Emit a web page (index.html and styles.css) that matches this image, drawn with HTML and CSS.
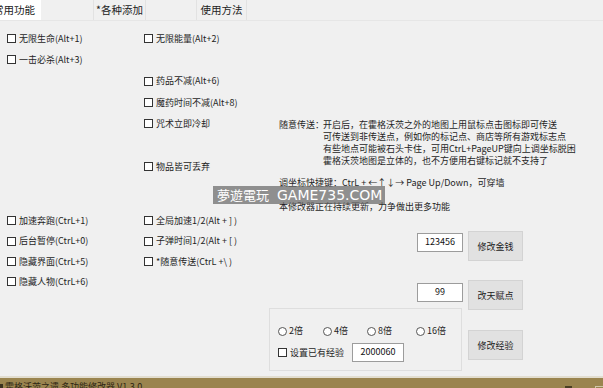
FILE: index.html
```html
<!DOCTYPE html>
<html lang="zh-CN">
<head>
<meta charset="utf-8">
<title>霍格沃茨之遗 多功能修改器</title>
<link rel="stylesheet" href="styles.css">
</head>
<body>
<div class="app">
  <div class="tabs">
    <div class="tab tab-active">常用功能</div>
    <div class="tab tab-add">*各种添加</div>
    <div class="tab tab-help">使用方法</div>
  </div>

  <div class="main">
    <div class="left">
      <div class="grid grid-upper">
        <label class="cb"><span class="box"></span>无限生命(Alt+1)</label>
        <label class="cb"><span class="box"></span>无限能量(Alt+2)</label>
        <label class="cb"><span class="box"></span>一击必杀(Alt+3)</label>
        <div></div>
        <div></div>
        <label class="cb"><span class="box"></span>药品不减(Alt+6)</label>
        <div></div>
        <label class="cb"><span class="box"></span>魔药时间不减(Alt+8)</label>
        <div></div>
        <label class="cb"><span class="box"></span>咒术立即冷却</label>
        <div></div>
        <div></div>
        <div></div>
        <label class="cb"><span class="box"></span>物品皆可丢弃</label>
      </div>
      <div class="grid grid-lower">
        <label class="cb"><span class="box"></span>加速奔跑(CtrL+1)</label>
        <label class="cb"><span class="box"></span>全局加速1/2(Alt + ] )</label>
        <label class="cb"><span class="box"></span>后台暂停(CtrL+0)</label>
        <label class="cb"><span class="box"></span>子弹时间1/2(Alt + [ )</label>
        <label class="cb"><span class="box"></span>隐藏界面(CtrL+5)</label>
        <label class="cb"><span class="box"></span>*随意传送(CtrL +\ )</label>
        <label class="cb"><span class="box"></span>隐藏人物(CtrL+6)</label>
        <div></div>
      </div>
    </div>

    <div class="right">
      <div class="note">
        <div class="note-tele">
          <span class="note-label">随意传送：</span>
          <div class="note-lines">
            <p>开启后，在霍格沃茨之外的地图上用鼠标点击图标即可传送</p>
            <p>可传送到非传送点，例如你的标记点、商店等所有游戏标志点</p>
            <p>有些地点可能被石头卡住，可用CtrL+PageUP键向上调坐标脱困</p>
            <p>霍格沃茨地图是立体的，也不方便用右键标记就不支持了</p>
          </div>
        </div>
        <p class="note-hint">调坐标快捷键：CtrL + ←↑↓→ Page Up/Down，可穿墙</p>
        <p class="note-update">本修改器正在持续更新，力争做出更多功能</p>
      </div>
      <div class="row row-money">
        <input class="field field-num" type="text" value="123456" readonly>
        <button class="btn">修改金钱</button>
      </div>
      <div class="row row-talent">
        <input class="field field-num" type="text" value="99" readonly>
        <button class="btn">改天赋点</button>
      </div>
    </div>
  </div>

  <div class="bottom">
    <div class="group">
      <div class="radios">
        <label class="rb"><span class="dot"></span>2倍</label>
        <label class="rb"><span class="dot"></span>4倍</label>
        <label class="rb"><span class="dot"></span>8倍</label>
        <label class="rb"><span class="dot"></span>16倍</label>
      </div>
      <div class="exp-row">
        <label class="cb"><span class="box"></span>设置已有经验</label>
        <input class="field field-exp" type="text" value="2000060" readonly>
      </div>
    </div>
    <button class="btn btn-exp">修改经验</button>
  </div>

  <div class="footer">
    <span class="footer-icon"></span>
    <span class="footer-title">霍格沃茨之遗 多功能修改器 V1.3.0</span>
    <span class="footer-ctl footer-min"></span>
    <span class="footer-ctl footer-max"></span>
  </div>

  <div class="watermark"><span class="wm-cjk">夢遊電玩</span><span class="wm-site">GAME735.COM</span></div>
</div>
</body>
</html>
```

FILE: styles.css
```css
* { box-sizing: border-box; }

html, body {
  margin: 0;
  padding: 0;
  background: #f0f0f0;
  overflow: hidden;
}

body {
  font-family: "Noto Sans CJK SC", "Noto Sans CJK TC", "Noto Sans", sans-serif;
  font-size: 9px;
  color: #1e1e1e;
}

.app {
  position: relative;
  width: 603px;
  height: 388px;
  display: flex;
  flex-direction: column;
  overflow: hidden;
}

/* tabs */
.tabs {
  display: flex;
  height: 21px;
  border-bottom: 1px solid #e6e6e6;
  flex: none;
}
.tab {
  height: 20px;
  font-size: 10.5px;
  line-height: 20px;
  text-align: center;
  white-space: nowrap;
  color: #222;
}
.tab-active {
  margin-left: -13px;
  width: 54px;
  background: #ffffff;
}
.tab-add {
  margin-left: 52px;
  width: 53px;
  border-left: 1px solid #e2e2e2;
  border-right: 1px solid #e2e2e2;
}
.tab-help {
  margin-left: 50px;
  width: 51px;
  border-left: 1px solid #e2e2e2;
  border-right: 1px solid #e2e2e2;
}

/* main */
.main {
  display: flex;
  flex: none;
}
.left {
  width: 279px;
  padding-left: 7px;
  padding-top: 7px;
  flex: none;
}
.grid {
  display: grid;
  grid-template-columns: 137px 1fr;
}
.grid-upper {
  grid-auto-rows: 21.33px;
}
.grid-lower {
  margin-top: 33.5px;
  grid-auto-rows: 20.33px;
}

.cb, .rb {
  display: flex;
  align-items: center;
  white-space: nowrap;
  line-height: 12px;
}
.box {
  width: 9px;
  height: 9px;
  border: 1px solid #333;
  background: #fff;
  margin-right: 3px;
  flex: none;
}
.dot {
  width: 9px;
  height: 9px;
  border: 1px solid #555;
  border-radius: 50%;
  background: #fff;
  margin-right: 2px;
  flex: none;
}

.right {
  flex: 1;
  padding-top: 98px;
}
.note {
  line-height: 12px;
  white-space: nowrap;
}
.note .note-lines p,
.note .note-hint,
.note .note-update { margin: 0; }
.note-tele {
  display: flex;
}
.note-label {
  width: 44px;
  flex: none;
}
.note .note-hint { margin-top: 10px; }
.note .note-update { margin-top: 12px; }

.row {
  display: flex;
  align-items: flex-start;
  margin-left: 138px;
  gap: 5px;
}
.row-money { margin-top: 18px; }
.row-money .field { margin-top: 2px; }
.row-talent { margin-top: 19px; }
.row-talent .field { margin-top: 3px; }

.field {
  display: block;
  height: 19px;
  border: 1px solid #9c9c9c;
  background: #fff;
  font-family: inherit;
  font-size: 9px;
  color: #111;
  text-align: center;
  padding: 0 0 2px;
  margin: 0;
  outline: none;
}
.field-num { width: 46px; }

.btn {
  width: 55px;
  height: 30px;
  background: #e1e1e1;
  border: 1px solid #d3d3d3;
  font-family: inherit;
  font-size: 9px;
  color: #222;
  padding: 0;
  margin: 0;
}

/* bottom group */
.bottom {
  display: flex;
  align-items: flex-start;
  margin-top: -2px;
  margin-left: 269px;
  gap: 6px;
  flex: none;
}
.group {
  width: 193px;
  height: 63px;
  border: 1px solid #dedede;
  padding: 16px 0 0 8px;
}
.radios {
  display: grid;
  grid-template-columns: 45px 44px 49px auto;
  height: 12px;
}
.exp-row {
  display: flex;
  align-items: center;
  margin-top: 6px;
}
.field-exp {
  width: 52px;
  margin-left: 8px;
}
.btn-exp { margin-top: 22px; }

/* footer */
.footer {
  margin-top: auto;
  height: 12px;
  border-top: 2px solid #e2ddcf;
  background: #9a844f;
  display: flex;
  align-items: flex-start;
  padding-top: 3px;
  flex: none;
  overflow: hidden;
}
.footer-icon {
  width: 3px;
  height: 6px;
  margin-top: 3px;
  background: #3b3220;
  flex: none;
}
.footer-title {
  margin-left: 2px;
  font-size: 9px;
  line-height: 12px;
  color: #2e2614;
  white-space: nowrap;
}
.footer-ctl { flex: none; }
.footer-min {
  margin-left: auto;
  width: 7px;
  height: 4px;
  margin-top: 5px;
  background: #4a3f24;
}
.footer-max {
  margin-left: 23px;
  width: 9px;
  height: 8px;
  margin-top: 5px;
  border: 1px solid #cfc6a8;
  margin-right: -1px;
}

/* watermark overlay */
.watermark {
  position: absolute;
  left: 213px;
  top: 186px;
  width: 172px;
  height: 18px;
  background: rgba(105, 105, 105, 0.72);
  color: #ffffff;
  line-height: 18px;
  padding-left: 4px;
  white-space: nowrap;
  overflow: hidden;
}
.wm-cjk {
  font-family: "Noto Sans CJK TC", "Noto Sans CJK SC", sans-serif;
  font-size: 13px;
  margin-right: 8px;
}
.wm-site {
  font-family: "DejaVu Sans", sans-serif;
  font-size: 14px;
}
```
